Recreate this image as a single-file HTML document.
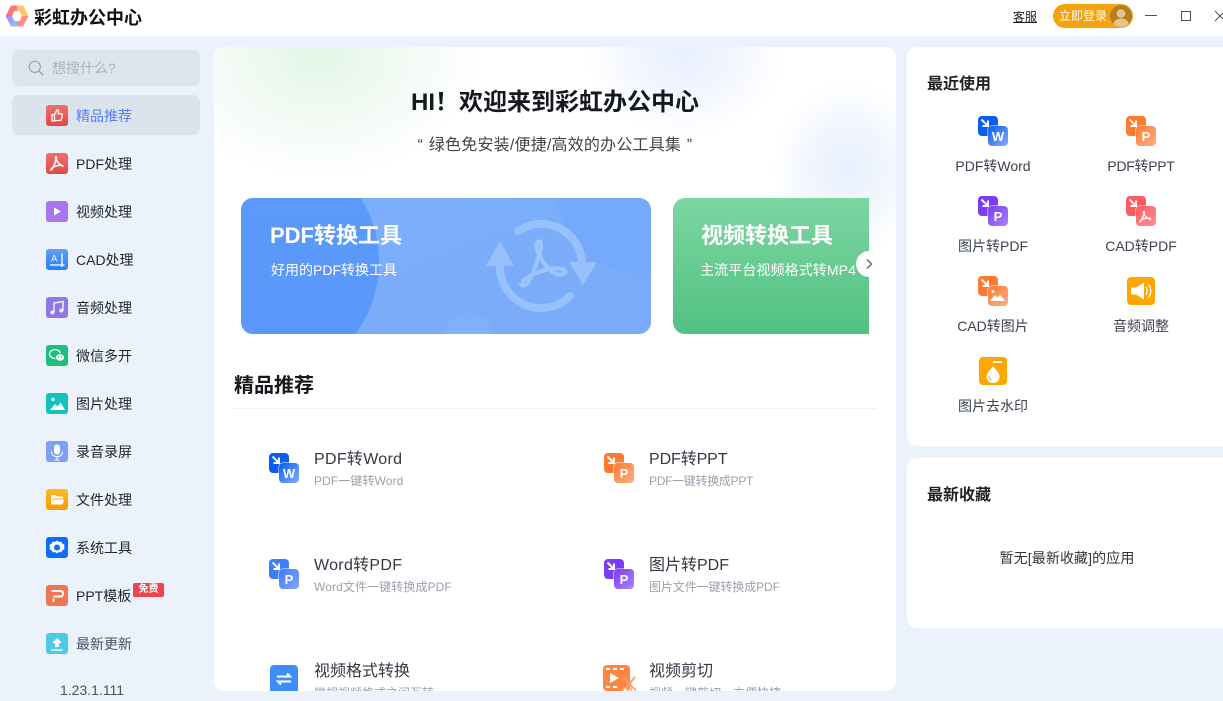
<!DOCTYPE html>
<html lang="zh">
<head>
<meta charset="utf-8">
<title>彩虹办公中心</title>
<style>
*{box-sizing:border-box;margin:0;padding:0}
html,body{width:1223px;height:701px;overflow:hidden;background:#ebf2fb;font-family:"Liberation Sans","Noto Sans CJK SC",sans-serif;color:#222}
.a{position:absolute}
.t{position:absolute;height:20px;line-height:20px;white-space:nowrap}
.m{font-size:14px;left:76px;color:#1f2430;margin-top:1px}
svg{position:absolute;display:block}
.c{transform:translateX(-50%);font-size:14px;color:#3c424d}
.h{font-size:16px;color:#333843;margin-top:1px}
.s{font-size:12px;color:#9aa1ad;margin-top:1px}
</style>
</head>
<body>
<svg width="0" height="0" style="position:absolute">
<defs>
<symbol id="dual-arrow" viewBox="0 0 30 30">
<path d="M3.500 3.500l6 6M10 4.500V10H4.500" fill="none" stroke="#fff" stroke-width="2"/>
</symbol>
<linearGradient id="gBlue" x1="0" y1="0" x2="1" y2="1"><stop offset="0" stop-color="#0b5cf5"/><stop offset="1" stop-color="#86adfb"/></linearGradient>
<linearGradient id="gBlue2" x1="0" y1="0" x2="1" y2="1"><stop offset="0" stop-color="#3f7cf8"/><stop offset="1" stop-color="#7fa6fa"/></linearGradient>
<linearGradient id="gOr" x1="0" y1="0" x2="1" y2="1"><stop offset="0" stop-color="#ff7a30"/><stop offset="1" stop-color="#ffae84"/></linearGradient>
<linearGradient id="gPu" x1="0" y1="0" x2="1" y2="1"><stop offset="0" stop-color="#7a3cf5"/><stop offset="1" stop-color="#ad84f8"/></linearGradient>
<linearGradient id="gRe" x1="0" y1="0" x2="1" y2="1"><stop offset="0" stop-color="#ff5a5f"/><stop offset="1" stop-color="#ff9196"/></linearGradient>
<linearGradient id="gRed" x1="0" y1="0" x2="0" y2="1"><stop offset="0" stop-color="#ef7070"/><stop offset="1" stop-color="#e44744"/></linearGradient>
<linearGradient id="gCad" x1="0" y1="0" x2="0" y2="1"><stop offset="0" stop-color="#639ff8"/><stop offset="1" stop-color="#2a7df0"/></linearGradient>
<linearGradient id="gFo" x1="0" y1="0" x2="0" y2="1"><stop offset="0" stop-color="#ffb826"/><stop offset="1" stop-color="#f59f00"/></linearGradient>
<linearGradient id="lgBL" x1="0" y1="0" x2="1" y2="1"><stop offset="0" stop-color="#b57cf0"/><stop offset="1" stop-color="#7fd0f5"/></linearGradient>
</defs>
</svg>

<!-- title bar -->
<div class="a" style="left:0;top:0;width:1223px;height:36px;background:#fff"></div>
<svg style="left:5px;top:5px" width="24" height="22" viewBox="0 0 24 22">
<path d="M6 .5h6V6H9.500L7 11H.5z" fill="#f47b7b"/>
<path d="M12 .5h6L23.500 11H17l-2.500-5H12z" fill="#ffc670"/>
<path d="M.5 11H7l2.500 5H12v5.500H6z" fill="url(#lgBL)"/>
<path d="M12 16h2.500L17 11h6.500L18 21.500h-6z" fill="#ff8f7f"/>
</svg>
<div class="t" style="left:34px;top:8px;font-size:18px;font-weight:700;color:#111">彩虹办公中心</div>
<div class="t" style="left:1013px;top:7px;font-size:12px;color:#222;text-decoration:underline">客服</div>
<div class="a" style="left:1053px;top:4px;width:80px;height:24px;border-radius:12px;background:#f5a30c"></div>
<div class="t" style="left:1059px;top:6px;font-size:12px;color:#fff">立即登录</div>
<svg style="left:1110px;top:5px" width="22" height="22" viewBox="0 0 22 22">
<defs><clipPath id="av"><circle cx="11" cy="11" r="11"/></clipPath></defs>
<circle cx="11" cy="11" r="11" fill="#b47f22"/>
<g clip-path="url(#av)"><circle cx="11" cy="8.500" r="4.300" fill="#e6c48b"/><ellipse cx="11" cy="19" rx="7.500" ry="5.500" fill="#e6c48b"/></g>
</svg>
<div class="a" style="left:1145px;top:15px;width:12px;height:1px;background:#4a5060"></div>
<div class="a" style="left:1181px;top:11px;width:10px;height:10px;border:1px solid #4a5060"></div>
<svg style="left:1214px;top:10px" width="9" height="12" viewBox="0 0 9 12"><path d="M1 1l10 10M11 1L1 11" stroke="#4a5060" stroke-width="1" fill="none"/></svg>

<!-- sidebar -->
<div class="a" style="left:12px;top:50px;width:188px;height:36px;border-radius:7px;background:#dce4ec"></div>
<svg style="left:28px;top:60px" width="16" height="16" viewBox="0 0 16 16"><circle cx="6.800" cy="6.800" r="5.600" fill="none" stroke="#9aa4b4" stroke-width="1.200"/><path d="M11 11l4 4" stroke="#9aa4b4" stroke-width="1.400"/></svg>
<div class="t" style="left:52px;top:58px;font-size:14px;color:#aeb2b8">想搜什么?</div>
<div class="a" style="left:12px;top:95px;width:188px;height:40px;border-radius:7px;background:#dbe3ec"></div>

<svg style="left:46px;top:105px" width="22" height="21" viewBox="0 0 22 21"><rect width="22" height="21" rx="3" fill="url(#gRed)"/><path d="M6 9.500h2.500v6.500H6zM8.500 9.500l2.500-4.500c1.200-.6 1.900.3 1.600 1.500l-.5 2.200h3c1 0 1.400.7 1.200 1.500l-1 4.300c-.2.600-.6 1-1.200 1H8.500" fill="none" stroke="#fff" stroke-width="1.300"/></svg>
<div class="t m" style="top:105px;color:#5b7df5">精品推荐</div>

<svg style="left:46px;top:153px" width="22" height="21" viewBox="0 0 22 21"><rect width="22" height="21" rx="3" fill="url(#gRed)"/><path d="M4 17c2 1 5-6 6.500-12 .3-1.500-1.500-1.500-1 0 .8 3 4 7 8 8.500M5 16c3-3 6-4 12-3.500" fill="none" stroke="#fff" stroke-width="1.600"/></svg>
<div class="t m" style="top:153px">PDF处理</div>

<svg style="left:46px;top:201px" width="22" height="21" viewBox="0 0 22 21"><rect width="22" height="21" rx="3" fill="#a974f0"/><path d="M8 6.500l7 4-7 4z" fill="#fff"/></svg>
<div class="t m" style="top:201px">视频处理</div>

<svg style="left:46px;top:249px" width="22" height="21" viewBox="0 0 22 21"><rect width="22" height="21" rx="3" fill="url(#gCad)"/><path d="M4 16h14.500M16 4.500V18" stroke="#fff" stroke-width="1.300" fill="none"/><text x="5" y="12.500" font-size="9.500" fill="#fff" font-family="Liberation Sans">A</text></svg>
<div class="t m" style="top:249px">CAD处理</div>

<svg style="left:46px;top:297px" width="22" height="21" viewBox="0 0 22 21"><rect width="22" height="21" rx="3" fill="#8f78e4"/><path d="M8 15.500V6l9-1.500V13.500" fill="none" stroke="#f0ebff" stroke-width="1.500"/><circle cx="6.300" cy="15.500" r="2" fill="#f0ebff"/><circle cx="15.300" cy="13.500" r="2" fill="#f0ebff"/></svg>
<div class="t m" style="top:297px">音频处理</div>

<svg style="left:46px;top:345px" width="22" height="21" viewBox="0 0 22 21"><rect width="22" height="21" rx="3" fill="#1dbf7e"/><ellipse cx="9" cy="9" rx="5.500" ry="4.500" fill="none" stroke="#fff" stroke-width="1.200"/><ellipse cx="14" cy="12.500" rx="4.500" ry="3.700" fill="#fff" stroke="#1dbf7e" stroke-width=".8"/><circle cx="12.500" cy="12" r=".7" fill="#1dbf7e"/><circle cx="15.500" cy="12" r=".7" fill="#1dbf7e"/></svg>
<div class="t m" style="top:345px">微信多开</div>

<svg style="left:46px;top:393px" width="22" height="21" viewBox="0 0 22 21"><rect width="22" height="21" rx="3" fill="#13c2bf"/><circle cx="7" cy="6.500" r="1.700" fill="#fff"/><path d="M4 17l5-6 2.500 2.500 3-4L19 17z" fill="#fff"/></svg>
<div class="t m" style="top:393px">图片处理</div>

<svg style="left:46px;top:441px" width="22" height="21" viewBox="0 0 22 21"><rect width="22" height="21" rx="3" fill="#7ba0f5"/><rect x="8" y="3.500" width="6" height="10" rx="3" fill="#fff"/><path d="M5.500 10.500c0 7 11 7 11 0M11 15.500V19M8.500 19h5" fill="none" stroke="#fff" stroke-width="1"/></svg>
<div class="t m" style="top:441px">录音录屏</div>

<svg style="left:46px;top:489px" width="22" height="21" viewBox="0 0 22 21"><rect width="22" height="21" rx="3" fill="url(#gFo)"/><path d="M5 6h4.500l1.500 1.500h6V9.500H7.500L5 15z" fill="#fff"/><path d="M7.500 10.500H18.500L16.500 15.500H5z" fill="#fff"/></svg>
<div class="t m" style="top:489px">文件处理</div>

<svg style="left:46px;top:537px" width="22" height="21" viewBox="0 0 22 21"><rect width="22" height="21" rx="3" fill="#0d6efd"/><path d="M11 3.500l2 1.500 2.300-.4 1.100 2.100 2.100 1.100-.4 2.200.4 2.200-2.100 1.100-1.100 2.100-2.300-.4-2 1.500-2-1.500-2.300.4-1.100-2.100-2.100-1.100.4-2.200-.4-2.200 2.100-1.100 1.100-2.100 2.300.4z" fill="#fff"/><circle cx="11" cy="10.500" r="3" fill="#0d6efd"/></svg>
<div class="t m" style="top:537px">系统工具</div>

<svg style="left:46px;top:585px" width="22" height="21" viewBox="0 0 22 21"><rect width="22" height="21" rx="3" fill="#ef7653"/><path d="M5.500 6h9c3.500 0 3.500 5.500 0 5.500H7.500M7.500 13.500V17" fill="none" stroke="#fff" stroke-width="2"/></svg>
<div class="t m" style="top:585px">PPT模板</div>
<div class="a" style="left:133px;top:583px;width:31px;height:14px;border-radius:2px;background:#f0434c;color:#fff;font-size:10px;line-height:14px;text-align:center;font-weight:700">免费</div>

<svg style="left:46px;top:633px" width="22" height="21" viewBox="0 0 22 21"><rect width="22" height="21" rx="3" fill="#4ccbe9"/><path d="M11 5l5 5h-3v4H9v-4H6z" fill="#fff"/><path d="M5 17h12" stroke="#fff" stroke-width="1.300"/></svg>
<div class="t m" style="top:633px;color:#4a5160">最新更新</div>

<div class="t" style="left:60px;top:680px;font-size:14px;color:#4a5160">1.23.1.111</div>

<!-- main card -->
<div class="a" style="left:214px;top:47px;width:682px;height:644px;border-radius:10px;overflow:hidden;background:
radial-gradient(ellipse 75px 88px at 634px 122px,#e8f0fd 0%,#f1f6fe 50%,rgba(255,255,255,0) 100%),
radial-gradient(ellipse 100px 85px at 471px 5px,#e8f0fd 0%,#f2f6fe 50%,rgba(255,255,255,0) 100%),
radial-gradient(ellipse 165px 125px at 105px 8px,#e2f5e6 0%,#f2faf4 50%,rgba(255,255,255,0) 100%),
#fff">
<div class="t" style="left:0;width:682px;text-align:center;top:44px;height:24px;line-height:24px;font-size:24px;font-weight:700;color:#15181f">HI！欢迎来到彩虹办公中心</div>
<div class="t" style="left:0;width:682px;text-align:center;top:89px;font-size:16px;color:#444;letter-spacing:.2px;word-spacing:1px">“ 绿色免安装/便捷/高效的办公工具集 ”</div>

<!-- carousel -->
<div class="a" style="left:27px;top:151px;width:628px;height:136px;overflow:hidden">
<div class="a" style="left:0;top:0;width:410px;height:136px;border-radius:12px;overflow:hidden;background:linear-gradient(160deg,#7cb0fb,#7aaafa)">
<div class="a" style="left:315px;top:-92px;width:168px;height:168px;border-radius:50%;background:#74a9fb"></div>
<div class="a" style="left:-106px;top:-58px;width:244px;height:244px;border-radius:50%;background:linear-gradient(180deg,#5c9af9,#5896fb)"></div>
<div class="a" style="left:202px;top:115px;width:52px;height:52px;border-radius:50%;background:#80b0fb"></div>
<svg style="left:0;top:0" width="410" height="136" viewBox="241 198 410 136">
<g fill="none" stroke="#97c0fd" stroke-width="8" stroke-linecap="round">
<path d="M518 231A41 41 0 0 1 582 262"/>
<path d="M570 296A41 41 0 0 1 500 266"/>
</g>
<path d="M569 262h28l-14 23zM486 266h28l-14-25z" fill="#97c0fd"/>
<path d="M520 283C526 292 533 276 540 252C543 240 539 240 537 243C534 250 545 265 550 270C556 276 567 276 565 271C563 265 535 269 522 282" fill="none" stroke="#9ec4fd" stroke-width="4"/>
</svg>
<div class="t" style="left:29px;top:25px;height:26px;line-height:26px;font-size:22px;font-weight:700;color:#fff">PDF转换工具</div>
<div class="t" style="left:30px;top:62px;font-size:14px;color:#fff">好用的PDF转换工具</div>
</div>
<div class="a" style="left:432px;top:0;width:300px;height:136px;border-radius:12px;overflow:hidden;background:linear-gradient(180deg,#7cd6a2,#52c181)">
<div class="t" style="left:28px;top:25px;height:26px;line-height:26px;font-size:22px;font-weight:700;color:#fff">视频转换工具</div>
<div class="t" style="left:27px;top:62px;font-size:14px;color:#fff;letter-spacing:.1px">主流平台视频格式转MP4</div>
</div>
</div>
<div class="a" style="left:642px;top:204px;width:26px;height:26px;border-radius:50%;background:#fff"></div>
<svg style="left:652px;top:212px" width="7" height="10" viewBox="0 0 7 10"><path d="M1 .5l4.500 4.500L1 9.500" fill="none" stroke="#667080" stroke-width="1.500"/></svg>

<div class="t" style="left:20px;top:327px;height:24px;line-height:24px;font-size:20px;font-weight:700;color:#15181f">精品推荐</div>
<div class="a" style="left:20px;top:361px;width:642px;height:1px;background:#eef0f2"></div>

<!-- list -->
<svg style="left:55px;top:406px" width="30" height="30" viewBox="0 0 30 30"><rect width="20" height="20" rx="4" fill="#0b5cf5"/><use href="#dual-arrow" width="30" height="30"/><rect x="9.500" y="9.500" width="21" height="21" rx="4.500" fill="#fff"/><rect x="10" y="10" width="20" height="20" rx="4" fill="url(#gBlue)"/><text x="20" y="25" text-anchor="middle" font-size="13" font-weight="700" fill="#fff" font-family="Liberation Sans">W</text></svg>
<div class="t h" style="left:100px;top:402px;letter-spacing:.3px">PDF转Word</div>
<div class="t s" style="left:100px;top:423px;letter-spacing:.1px">PDF一键转Word</div>

<svg style="left:390px;top:406px" width="30" height="30" viewBox="0 0 30 30"><rect width="20" height="20" rx="4" fill="#ff7a30"/><use href="#dual-arrow" width="30" height="30"/><rect x="9.500" y="9.500" width="21" height="21" rx="4.500" fill="#fff"/><rect x="10" y="10" width="20" height="20" rx="4" fill="url(#gOr)"/><text x="20" y="25" text-anchor="middle" font-size="13" font-weight="700" fill="#fff" font-family="Liberation Sans">P</text></svg>
<div class="t h" style="left:435px;top:402px;letter-spacing:-.1px">PDF转PPT</div>
<div class="t s" style="left:435px;top:423px;letter-spacing:-.3px">PDF一键转换成PPT</div>

<svg style="left:55px;top:512px" width="30" height="30" viewBox="0 0 30 30"><rect width="20" height="20" rx="4" fill="#3f7cf8"/><use href="#dual-arrow" width="30" height="30"/><rect x="9.500" y="9.500" width="21" height="21" rx="4.500" fill="#fff"/><rect x="10" y="10" width="20" height="20" rx="4" fill="url(#gBlue2)"/><text x="20" y="25" text-anchor="middle" font-size="13" font-weight="700" fill="#fff" font-family="Liberation Sans">P</text></svg>
<div class="t h" style="left:100px;top:508px;letter-spacing:.3px">Word转PDF</div>
<div class="t s" style="left:100px;top:529px;letter-spacing:.1px">Word文件一键转换成PDF</div>

<svg style="left:390px;top:512px" width="30" height="30" viewBox="0 0 30 30"><rect width="20" height="20" rx="4" fill="#7a3cf5"/><use href="#dual-arrow" width="30" height="30"/><rect x="9.500" y="9.500" width="21" height="21" rx="4.500" fill="#fff"/><rect x="10" y="10" width="20" height="20" rx="4" fill="url(#gPu)"/><text x="20" y="25" text-anchor="middle" font-size="13" font-weight="700" fill="#fff" font-family="Liberation Sans">P</text></svg>
<div class="t h" style="left:435px;top:508px">图片转PDF</div>
<div class="t s" style="left:435px;top:529px;letter-spacing:-.1px">图片文件一键转换成PDF</div>

<svg style="left:56px;top:618px" width="28" height="28" viewBox="0 0 28 28"><rect width="28" height="28" rx="4" fill="#3f8cfb"/><path d="M7 11.500h13l-3-3M21 16.500H8l3 3" fill="none" stroke="#fff" stroke-width="2"/></svg>
<div class="t h" style="left:100px;top:614px">视频格式转换</div>
<div class="t s" style="left:100px;top:635px">常规视频格式之间互转</div>

<svg style="left:389px;top:618px" width="34" height="30" viewBox="0 0 34 30"><rect width="27" height="26" rx="4" fill="#ff8540"/><path d="M3 4h4M10 4h4M17 4h4M3 22h4M10 22h4" stroke="#fff" stroke-width="2"/><path d="M7 8l9 5-9 5z" fill="#fff"/><path d="M21 12l9 11M32 12l-9 11" stroke="#ff9c74" stroke-width="2" fill="none"/><circle cx="22" cy="25" r="2.300" fill="#fff" stroke="#ff9c74" stroke-width="1.500"/><circle cx="30" cy="25" r="2.300" fill="#fff" stroke="#ff9c74" stroke-width="1.500"/></svg>
<div class="t h" style="left:435px;top:614px">视频剪切</div>
<div class="t s" style="left:435px;top:635px">视频一键剪切，方便快捷</div>
</div>

<!-- right cards -->
<div class="a" style="left:907px;top:47px;width:330px;height:399px;border-radius:10px;background:#fff"></div>
<div class="a" style="left:907px;top:458px;width:330px;height:170px;border-radius:10px;background:#fff"></div>
<div class="t" style="left:927px;top:75px;font-size:16px;font-weight:700;color:#222">最近使用</div>

<svg style="left:978px;top:116px" width="30" height="30" viewBox="0 0 30 30"><rect width="20" height="20" rx="4" fill="#0b5cf5"/><use href="#dual-arrow" width="30" height="30"/><rect x="9.500" y="9.500" width="21" height="21" rx="4.500" fill="#fff"/><rect x="10" y="10" width="20" height="20" rx="4" fill="url(#gBlue)"/><text x="20" y="25" text-anchor="middle" font-size="13" font-weight="700" fill="#fff" font-family="Liberation Sans">W</text></svg>
<div class="t c" style="left:993px;top:156px">PDF转Word</div>

<svg style="left:1126px;top:116px" width="30" height="30" viewBox="0 0 30 30"><rect width="20" height="20" rx="4" fill="#ff7a30"/><use href="#dual-arrow" width="30" height="30"/><rect x="9.500" y="9.500" width="21" height="21" rx="4.500" fill="#fff"/><rect x="10" y="10" width="20" height="20" rx="4" fill="url(#gOr)"/><text x="20" y="25" text-anchor="middle" font-size="13" font-weight="700" fill="#fff" font-family="Liberation Sans">P</text></svg>
<div class="t c" style="left:1141px;top:156px;letter-spacing:-.3px">PDF转PPT</div>

<svg style="left:978px;top:196px" width="30" height="30" viewBox="0 0 30 30"><rect width="20" height="20" rx="4" fill="#7a3cf5"/><use href="#dual-arrow" width="30" height="30"/><rect x="9.500" y="9.500" width="21" height="21" rx="4.500" fill="#fff"/><rect x="10" y="10" width="20" height="20" rx="4" fill="url(#gPu)"/><text x="20" y="25" text-anchor="middle" font-size="13" font-weight="700" fill="#fff" font-family="Liberation Sans">P</text></svg>
<div class="t c" style="left:993px;top:236px">图片转PDF</div>

<svg style="left:1126px;top:196px" width="30" height="30" viewBox="0 0 30 30"><rect width="20" height="20" rx="4" fill="#ff5a5f"/><use href="#dual-arrow" width="30" height="30"/><rect x="9.500" y="9.500" width="21" height="21" rx="4.500" fill="#fff"/><rect x="10" y="10" width="20" height="20" rx="4" fill="url(#gRe)"/><path d="M13 26c2 1 3.500-4 5.500-9.500.3-1.500-1.300-1.500-1 0 .6 2.500 3 6 7.500 7M14 25c2.500-2 5-3.300 11-2.800" fill="none" stroke="#fff" stroke-width="1.300"/></svg>
<div class="t c" style="left:1141px;top:236px">CAD转PDF</div>

<svg style="left:978px;top:276px" width="30" height="30" viewBox="0 0 30 30"><rect width="20" height="20" rx="4" fill="#ff7a30"/><use href="#dual-arrow" width="30" height="30"/><rect x="9.500" y="9.500" width="21" height="21" rx="4.500" fill="#fff"/><rect x="10" y="10" width="20" height="20" rx="4" fill="url(#gOr)"/><circle cx="15" cy="15.500" r="1.500" fill="#fff"/><path d="M12 25l5-6 2.500 2.500 2.500-3 5 6.500z" fill="#fff"/></svg>
<div class="t c" style="left:993px;top:316px">CAD转图片</div>

<svg style="left:1127px;top:277px" width="28" height="28" viewBox="0 0 28 28"><rect width="28" height="28" rx="4" fill="#ffa600"/><path d="M4 10.500h5l8-5v17l-8-5H4z" fill="#fff"/><path d="M19 10c1.500 2.500 1.500 5.500 0 8M21.500 7.500c3 4 3 9 0 13" fill="none" stroke="#fff" stroke-width="1.300"/></svg>
<div class="t c" style="left:1141px;top:316px">音频调整</div>

<svg style="left:979px;top:357px" width="28" height="28" viewBox="0 0 28 28"><rect width="28" height="28" rx="4" fill="#ffa600"/><path d="M14 9c3 4 6.500 7 6.500 10.500a6.500 6.500 0 0 1-13 0C7.500 16 11 13 14 9z" fill="#fff"/><path d="M14 5h9" stroke="#fff" stroke-width="2"/><path d="M10 19c0 2 1 3.500 2.500 4" stroke="#ffa600" stroke-width="1" fill="none"/></svg>
<div class="t c" style="left:993px;top:396px">图片去水印</div>

<div class="t" style="left:927px;top:486px;font-size:16px;font-weight:700;color:#222">最新收藏</div>
<div class="t c" style="left:1067px;top:548px;color:#333;letter-spacing:.1px">暂无[最新收藏]的应用</div>
</body>
</html>
